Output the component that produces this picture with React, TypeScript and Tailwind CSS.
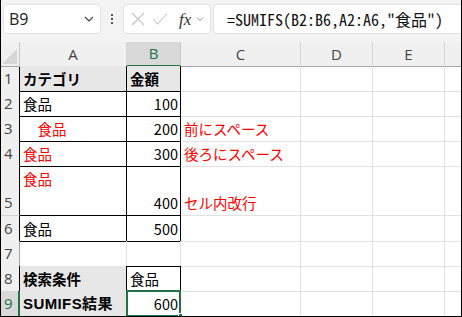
import React from 'react';

type Row = {
  n: number;
  h: string;
  a?: React.ReactNode;
  b?: React.ReactNode;
  c?: React.ReactNode;
  aHead?: boolean;
  bHead?: boolean;
  aRed?: boolean;
  boxed: boolean;
};

const rows: Row[] = [
  { n: 1, h: 'h-[25px]', a: 'カテゴリ', b: '金額', aHead: true, bHead: true, boxed: true },
  { n: 2, h: 'h-[25px]', a: '食品', b: '100', boxed: true },
  { n: 3, h: 'h-[25px]', a: '　食品', b: '200', c: '前にスペース', aRed: true, boxed: true },
  { n: 4, h: 'h-[25px]', a: '食品 ', b: '300', c: '後ろにスペース', aRed: true, boxed: true },
  { n: 5, h: 'h-[50px]', a: '食品', b: '400', c: 'セル内改行', aRed: true, boxed: true },
  { n: 6, h: 'h-[25px]', a: '食品', b: '500', boxed: true },
  { n: 7, h: 'h-[25px]', boxed: false },
  { n: 8, h: 'h-[25px]', a: '検索条件', b: '食品', aHead: true, boxed: true },
  { n: 9, h: 'h-[25px]', a: 'SUMIFS結果', b: '600', aHead: true, boxed: true },
];

const cols = ['A', 'B', 'C', 'D', 'E'];

function Chevron({ className }: { className?: string }) {
  return (
    <svg width="10" height="6" viewBox="0 0 10 6" className={className}>
      <path d="M1 1 L5 5 L9 1" fill="none" stroke="currentColor" strokeWidth="1.2" />
    </svg>
  );
}

function Toolbar() {
  return (
    <div className="flex h-[42px] items-start bg-[#f3f3f3] pl-[2px] pt-[4px]">
      <div className="flex h-[30px] w-[98px] items-center justify-between rounded-[4px] border border-[#e3e3e3] bg-white pl-[5px] pr-[6px]">
        <span className="font-['Open_Sans',sans-serif] text-[16px] text-[#222]">B9</span>
        <Chevron className="text-[#444]" />
      </div>
      <div className="flex h-[30px] w-[22px] flex-col items-center justify-center gap-[2px]">
        <span className="h-[2px] w-[2px] bg-[#555]" />
        <span className="h-[2px] w-[2px] bg-[#555]" />
        <span className="h-[2px] w-[2px] bg-[#555]" />
      </div>
      <div className="flex h-[30px] w-[88px] items-center rounded-[4px] border border-[#e3e3e3] bg-white pl-[7px]">
        <svg width="14" height="14" viewBox="0 0 14 14" className="text-[#c4c4c4]">
          <path d="M1 1 L13 13 M13 1 L1 13" stroke="currentColor" strokeWidth="1.1" />
        </svg>
        <svg width="16" height="14" viewBox="0 0 16 14" className="ml-[7px] text-[#c4c4c4]">
          <path d="M1 7 L5.5 12 L15 1.5" fill="none" stroke="currentColor" strokeWidth="1.1" />
        </svg>
        <span className="ml-[11px] font-['Liberation_Serif',serif] text-[17px] italic leading-none text-[#333]">
          fx
        </span>
        <Chevron className="ml-[4px] scale-75 text-[#888]" />
      </div>
      <div className="ml-[2px] flex h-[30px] flex-1 items-center rounded-l-[4px] border border-r-0 border-[#e3e3e3] bg-white pl-[13px]">
        <span className="whitespace-pre font-['Noto_Sans_Mono_CJK_JP','Liberation_Mono',monospace] text-[16px] leading-none text-[#111]">
          =SUMIFS(B2:B6,A2:A6,"食品")
        </span>
      </div>
    </div>
  );
}

export default function App() {
  const grid =
    'grid grid-cols-[19px_107px_54px_120px_72px_72px_1fr] font-["Noto_Sans_CJK_JP",sans-serif]';

  return (
    <div className="h-[317px] w-[462px] overflow-hidden border-x border-b border-black bg-white">
      <Toolbar />

      {/* column headers */}
      <div className={`${grid} h-[24px] bg-[#f0f0f0]`}>
        <div className="relative border-r border-b border-[#c8c8c8] border-b-[#a6a6a6]">
          <svg className="absolute bottom-[2px] right-[2px]" width="15" height="15" viewBox="0 0 15 15">
            <path d="M15 0 L15 15 L0 15 Z" fill="#d6d6d6" />
          </svg>
        </div>
        {cols.map((c) =>
          c === 'B' ? (
            <div
              key={c}
              className="flex items-center justify-center border-r border-b-2 border-r-[#c8c8c8] border-b-[#217346] bg-[#d9d9d9] font-['Open_Sans',sans-serif] text-[15px] text-[#217346]"
            >
              {c}
            </div>
          ) : (
            <div
              key={c}
              className="flex items-center justify-center border-r border-b border-r-[#d4d4d4] border-b-[#a6a6a6] font-['Open_Sans',sans-serif] text-[15px] text-[#444]"
            >
              {c}
            </div>
          ),
        )}
        <div className="border-b border-[#a6a6a6]" />
      </div>

      {/* cells */}
      {rows.map((r) => {
        const sel = r.n === 9;
        const edge = r.boxed ? 'border-black' : 'border-[#e1e1e1]';
        const underA = r.n === 7 ? 'border-b-black' : '';
        return (
          <div key={r.n} className={`${grid} ${r.h}`}>
            <div
              className={`flex items-end border-b border-r pl-[3px] font-['Open_Sans',sans-serif] text-[15px] leading-[25px] ${
                sel
                  ? 'border-b-[#d4d4d4] border-r-[#217346] border-r-2 bg-[#d9d9d9] text-[#217346]'
                  : `border-b-[#d4d4d4] bg-[#f0f0f0] text-[#444] ${r.boxed ? 'border-r-black' : 'border-r-[#a6a6a6]'}`
              }`}
            >
              {r.n}
            </div>
            <div
              className={`flex whitespace-pre border-r border-b pl-[3px] text-[14.5px] leading-[25px] ${edge} ${underA} ${
                r.n === 5 ? 'items-start' : 'items-end'
              } ${r.aHead ? 'bg-[#e7e7e7] font-bold' : ''} ${r.aRed ? 'text-[#ff0000]' : 'text-black'} ${
                sel ? "font-['Liberation_Sans','Noto_Sans_CJK_JP',sans-serif] text-[15px] tracking-[0.4px]" : ''
              }`}
            >
              {r.a}
            </div>
            <div
              className={`relative flex items-end border-r border-b pr-[2px] text-[14.5px] leading-[25px] text-black ${edge} ${underA} ${
                r.bHead ? 'bg-[#e7e7e7] pl-[3px] font-bold' : ''
              } ${r.n >= 2 && r.n <= 6 ? 'justify-end' : ''} ${r.n === 9 ? 'justify-end' : ''} ${
                r.n === 8 ? 'pl-[3px]' : ''
              }`}
            >
              {r.b}
              {sel && (
                <>
                  <div className="absolute inset-[-1px] border-2 border-[#217346]" />
                  <div className="absolute bottom-[-2px] right-[-3px] h-[5px] w-[5px] border border-white bg-[#217346]" />
                </>
              )}
            </div>
            <div className="flex items-end whitespace-nowrap border-r border-b border-[#e1e1e1] pl-[3px] text-[14.5px] leading-[25px] text-[#ff0000]">
              {r.c}
            </div>
            <div className="border-r border-b border-[#e1e1e1]" />
            <div className="border-r border-b border-[#e1e1e1]" />
            <div className="border-b border-[#e1e1e1]" />
          </div>
        );
      })}
    </div>
  );
}
